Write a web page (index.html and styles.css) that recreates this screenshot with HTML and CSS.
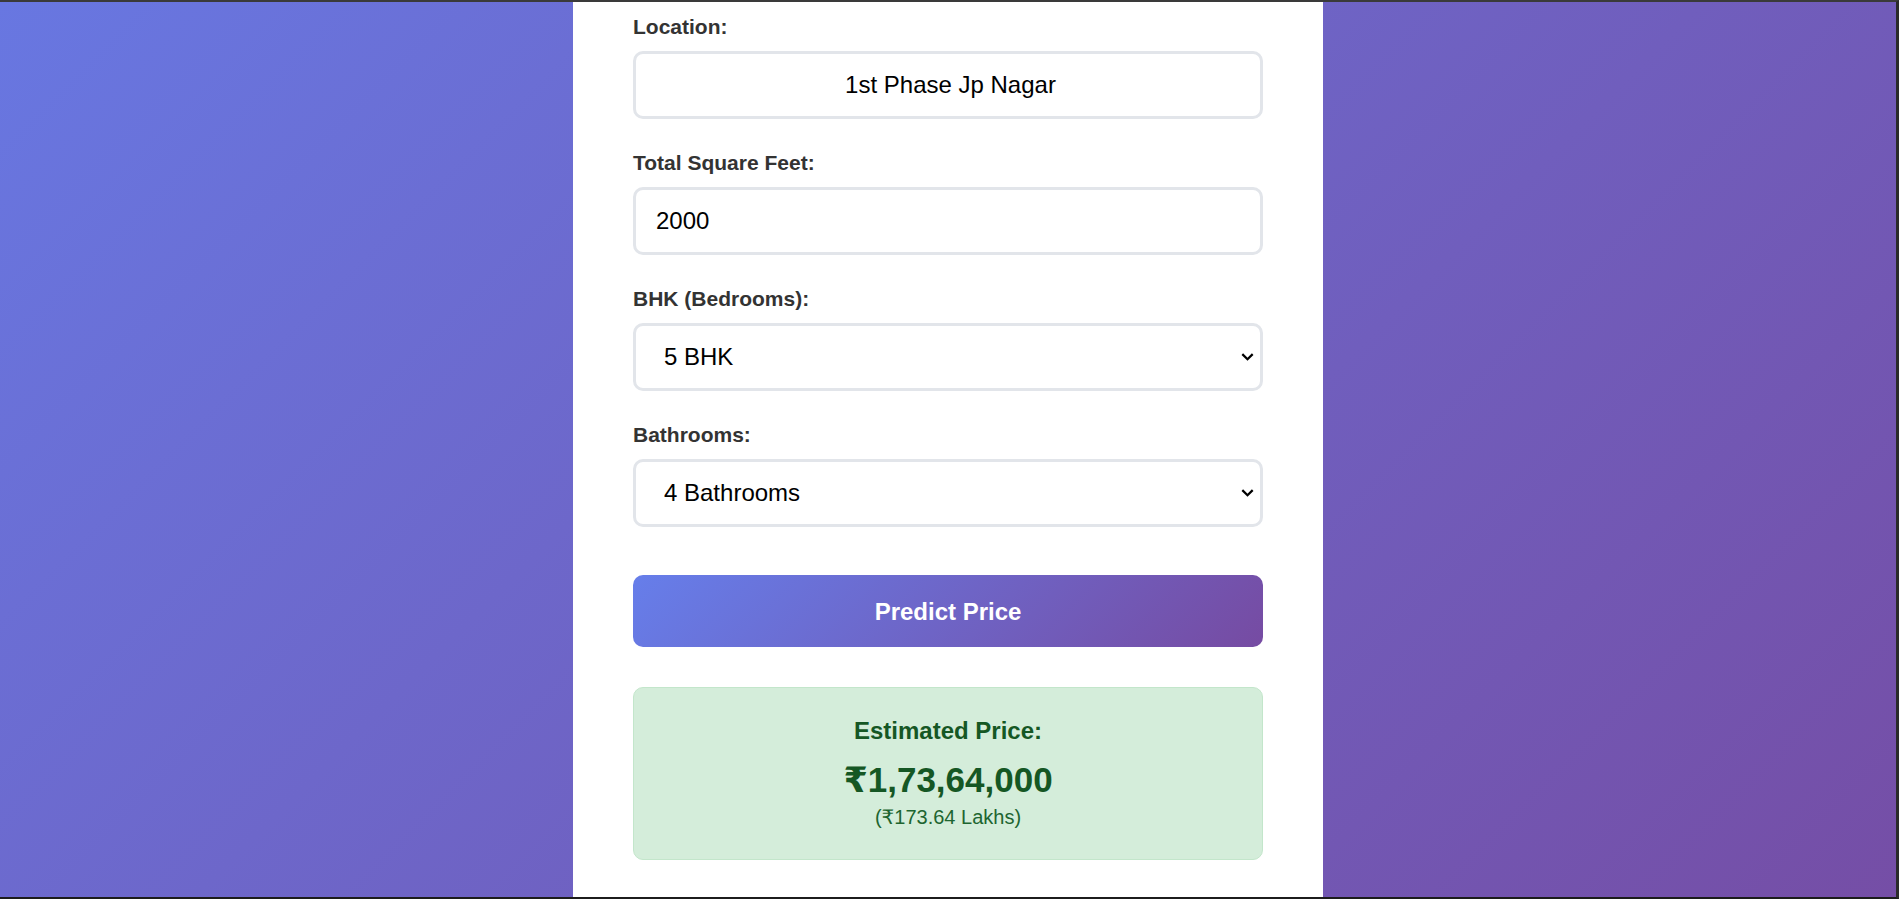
FILE: index.html
```html
<!DOCTYPE html>
<html lang="en">
<head>
<meta charset="utf-8">
<title>House Price Prediction</title>
<link rel="stylesheet" href="styles.css">
</head>
<body>
<div class="frame">
  <main class="card">
    <form class="form">
      <div class="group">
        <label class="label" for="loc">Location:</label>
        <input class="field field-center" id="loc" type="text" value="1st Phase Jp Nagar" readonly>
      </div>
      <div class="group">
        <label class="label" for="sqft">Total Square Feet:</label>
        <input class="field" id="sqft" type="text" value="2000">
      </div>
      <div class="group">
        <label class="label" for="bhk">BHK (Bedrooms):</label>
        <div class="select-wrap">
          <select class="field select" id="bhk">
            <option>5 BHK</option>
          </select>
          <svg class="chevron" width="13" height="9" viewBox="0 0 13 9"><path d="M1.3 1.6 L6.5 6.8 L11.7 1.6" fill="none" stroke="#000" stroke-width="2.2"/></svg>
        </div>
      </div>
      <div class="group">
        <label class="label" for="bath">Bathrooms:</label>
        <div class="select-wrap">
          <select class="field select" id="bath">
            <option>4 Bathrooms</option>
          </select>
          <svg class="chevron" width="13" height="9" viewBox="0 0 13 9"><path d="M1.3 1.6 L6.5 6.8 L11.7 1.6" fill="none" stroke="#000" stroke-width="2.2"/></svg>
        </div>
      </div>
      <button class="predict" type="button">Predict Price</button>
    </form>
    <section class="result">
      <h3 class="result-title">Estimated Price:</h3>
      <div class="result-price">₹1,73,64,000</div>
      <div class="result-lakhs">(₹173.64 Lakhs)</div>
    </section>
  </main>
</div>
</body>
</html>
```

FILE: styles.css
```css
* { box-sizing: border-box; }

html, body {
  margin: 0;
  padding: 0;
  background: #2b2b2b;
}

body {
  font-family: "Liberation Sans", Arial, "DejaVu Sans", sans-serif;
}

.frame {
  height: 899px;
  border-top: 2px solid #3a3a3a;
  border-right: 3px solid #2a2a2a;
  border-bottom: 2px solid #1c1c1c;
  background: linear-gradient(135deg, #6877e1 0%, #754ea6 100%);
  display: flex;
  justify-content: center;
  overflow: hidden;
}

.card {
  width: 750px;
  background: #ffffff;
  padding: 12px 60px 0;
}

.form {
  display: flex;
  flex-direction: column;
}

.group {
  margin-bottom: 31px;
}

.label {
  display: block;
  font-size: 21px;
  line-height: 25px;
  font-weight: bold;
  color: #333333;
  margin-bottom: 12px;
}

.field {
  display: block;
  width: 100%;
  height: 68px;
  border: 3px solid #e2e5ea;
  border-radius: 10px;
  padding: 0 20px;
  font-family: "Liberation Sans", Arial, sans-serif;
  font-size: 24px;
  line-height: 28px;
  color: #000000;
  background: #ffffff;
  outline: none;
}

.field-center {
  text-align: center;
  padding: 0 18px 0 23px;
}

.select-wrap {
  position: relative;
}

.select {
  appearance: none;
  -webkit-appearance: none;
  padding-left: 28px;
}

.chevron {
  position: absolute;
  right: 9px;
  top: 50%;
  transform: translateY(-50%);
  pointer-events: none;
}

.predict {
  margin-top: 17px;
  height: 72px;
  padding: 2px 0 0;
  border: none;
  border-radius: 10px;
  background: linear-gradient(135deg, #667eea 0%, #764ba2 100%);
  color: #ffffff;
  font-family: "Liberation Sans", Arial, sans-serif;
  font-size: 24px;
  font-weight: bold;
  cursor: pointer;
}

.result {
  margin-top: 40px;
  background: #d4edda;
  border: 1px solid #c3e6cb;
  border-radius: 10px;
  padding: 29px 25px 30px;
  text-align: center;
  color: #155724;
}

.result-title {
  margin: 0 0 14px;
  font-size: 24px;
  line-height: 28px;
  font-weight: bold;
}

.result-price {
  margin: 0 0 5px;
  font-size: 35px;
  line-height: 42px;
  font-weight: bold;
}

.result-lakhs {
  font-size: 20px;
  line-height: 23px;
  color: #1d6530;
}
```
